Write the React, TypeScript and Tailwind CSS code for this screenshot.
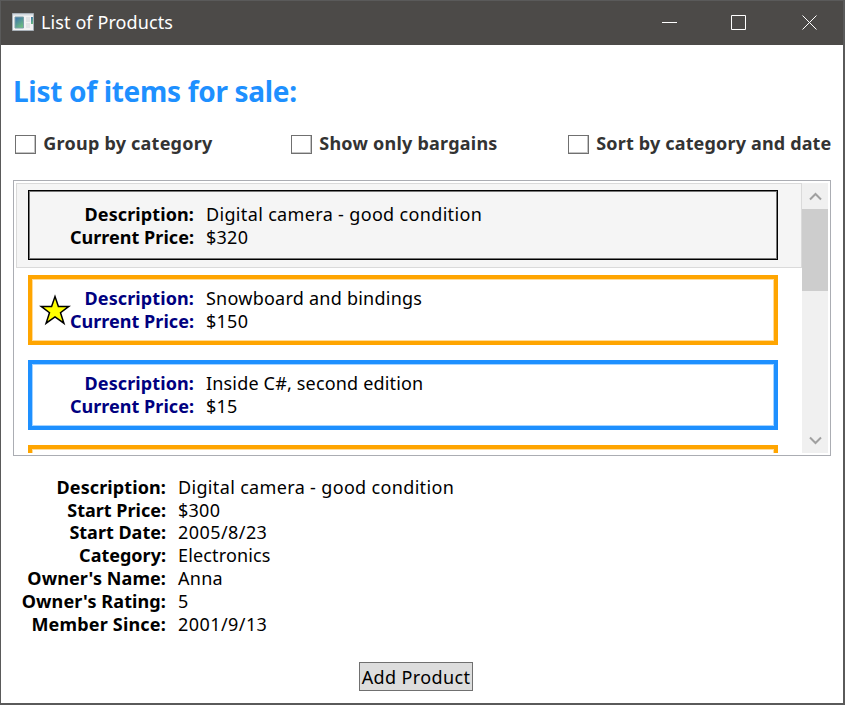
import React from "react";

type Kind = "selected" | "star" | "plain";

const FRAME: Record<Kind, string> = {
  selected: "border border-black",
  star: "border-4 border-[#ffa500]",
  plain: "border-4 border-[#1e90ff]",
};

const INNER: Record<Kind, string> = {
  selected: "border-[#777]",
  star: "border-[#ffdb99]",
  plain: "border-[#a5d3ff]",
};

const products: { id: number; name?: string; price?: string; kind: Kind; track?: string }[] = [
  { id: 1, name: "Digital camera - good condition", price: "$320", kind: "selected", track: "tracking-[0.34px]" },
  { id: 2, name: "Snowboard and bindings", price: "$150", kind: "star", track: "tracking-[0.24px]" },
  { id: 3, name: "Inside C#, second edition", price: "$15", kind: "plain", track: "tracking-[0.17px]" },
  { id: 4, kind: "star" },
];

const details = [
  ["Description:", "Digital camera - good condition", "tracking-[0.34px]", "tracking-[0.1px]"],
  ["Start Price:", "$300", "tracking-[0.25px]", "tracking-normal"],
  ["Start Date:", "2005/8/23", "tracking-[0.43px]", "tracking-normal"],
  ["Category:", "Electronics", "tracking-[0.15px]", "tracking-normal"],
  ["Owner's Name:", "Anna", "tracking-[0.25px]", "tracking-[0.08px]"],
  ["Owner's Rating:", "5", "tracking-[0.25px]", "tracking-[0.1px]"],
  ["Member Since:", "2001/9/13", "tracking-[0.43px]", "tracking-[0.18px]"],
];

function Star() {
  return (
    <svg width="32" height="32" viewBox="0 0 32 32" className="absolute top-[19px] left-[11px]">
      <path
        d="M16 2.500 L19.400 12.400 H29.800 L21.500 18.700 L24.900 29.200 L16 22.800 L7.100 29.200 L10.500 18.700 L2.200 12.400 H12.600 Z"
        fill="#ffff00"
        stroke="#000"
        strokeWidth="1.5"
      />
    </svg>
  );
}

function Item({ name, price, kind, track }: { name?: string; price?: string; kind: Kind; track?: string }) {
  const selected = kind === "selected";
  const labelColor = selected ? "text-black" : "text-[#000080]";
  return (
    <li
      className={`h-[85px] w-[786px] shrink-0 border pt-[6px] pl-[11px] ${
        selected ? "border-[#dadada] bg-[#f5f5f5]" : "border-transparent"
      }`}
    >
      <div className="relative h-[70px] w-[750px]">
        <div className={`absolute inset-0 ${FRAME[kind]}`}>
          <div className={`h-full border ${INNER[kind]}`} />
        </div>
        {name && kind === "star" && <Star />}
        {name && (
          <div
            className={`relative grid grid-cols-[166px_1fr] gap-x-3 leading-[23px] ${selected ? "pt-[13px]" : "pt-[12px]"}`}
          >
            <b className={`text-right tracking-[0.1px] ${labelColor}`}>Description:</b>
            <span className={track}>{name}</span>
            <b className={`text-right tracking-[0.03px] ${labelColor}`}>Current Price:</b>
            <span className="tracking-[0.25px]">{price}</span>
          </div>
        )}
      </div>
    </li>
  );
}

function Check({ label, track }: { label: string; track: string }) {
  return (
    <label className="flex items-center">
      <span className="mt-px mr-[7.8px] h-[19px] w-[20.5px] border border-[#707070] bg-white shadow-[inset_-1px_-1px_0_#c4c4c4]" />
      <b className={`-mt-[2px] text-[#333] ${track}`}>{label}</b>
    </label>
  );
}

export default function App() {
  return (
    <div className="flex h-[705px] w-[845px] flex-col overflow-hidden border border-r-2 border-b-2 border-[#5a5a5a] bg-white font-['Noto_Sans','Open_Sans',sans-serif] text-[18px] text-black">
      <header className="flex h-[44px] shrink-0 items-center bg-[#4c4a48] pl-[11px] text-white">
        <svg width="23" height="19" viewBox="0 0 23 19" className="-mt-[2px]">
          <defs>
            <linearGradient id="g" x1="0" y1="0" x2="0.6" y2="1">
              <stop offset="0" stopColor="#3a6db0" />
              <stop offset="1" stopColor="#6cbb80" />
            </linearGradient>
          </defs>
          <path d="M.5 .5h21v17h-21z" fill="#f3f3f3" stroke="#a9b1b9" />
          <path d="M1 1h20v1.500H1z" fill="#d5dbe0" />
          <path d="M3 4h8.500v11H3z" fill="url(#g)" stroke="#7d9fa8" />
          <path d="M14 4h4v5h-4zM14 10h4v5h-4z" fill="#e2e4e6" />
          <path d="M19 4h2v7h-2z" fill="url(#g)" />
        </svg>
        <span className="-mt-[2px] ml-[6px] leading-6 tracking-[0.1px]">List of Products</span>
        <svg width="156" height="18" viewBox="0 0 156 18" className="-mt-[2px] mr-[25px] ml-auto" fill="none" stroke="#fff">
          <path d="M0 9.500h15M69.500 2.500h14v14h-14zM140.500 2.500l14 14M154.500 2.500l-14 14" />
        </svg>
      </header>
      <main className="flex flex-1 flex-col pr-3 pl-3">
        <h1 className="mt-[26px] text-[28px] leading-[40px] font-bold tracking-[-0.31px] text-[#1e90ff]">
          List of items for sale:
        </h1>
        <div className="mt-[20px] grid h-[26px] grid-cols-[276px_277px_auto] items-center pl-[2px] whitespace-nowrap">
          <Check label="Group by category" track="tracking-[0.23px]" />
          <Check label="Show only bargains" track="tracking-[0.23px]" />
          <Check label="Sort by category and date" track="tracking-[0.16px]" />
        </div>
        <div className="mt-[23px] flex h-[276px] w-[818px] shrink-0 border border-[#abadb3] p-[2px]">
          <ul className="flex h-[270px] flex-1 flex-col overflow-hidden">
            {products.map(({ id, ...p }) => (
              <Item key={id} {...p} />
            ))}
          </ul>
          <div className="flex w-[26px] flex-col bg-[#f0f0f0]">
            <svg width="26" height="26" fill="none" stroke="#a0a0a0" strokeWidth="2">
              <path d="M8 16.500l5.500-5.500L19 16.500" />
            </svg>
            <div className="h-[82px] bg-[#cdcdcd]" />
            <svg width="26" height="26" fill="none" stroke="#a0a0a0" strokeWidth="2" className="mt-auto">
              <path d="M8 10.500l5.500 5.500L19 10.500" />
            </svg>
          </div>
        </div>
        <dl className="mt-[19.8px] grid grid-cols-[153px_1fr] gap-x-3 leading-[22.82px]">
          {details.map(([k, v, t, kt]) => (
            <React.Fragment key={k}>
              <dt className={`text-right font-bold ${kt}`}>{k}</dt>
              <dd className={t}>{v}</dd>
            </React.Fragment>
          ))}
        </dl>
        <button className="mt-[26.5px] ml-[346px] h-[29px] w-[114px] border border-[#707070] bg-[#ddd] pt-px leading-[27px] tracking-[0.38px] whitespace-nowrap">
          Add Product
        </button>
      </main>
    </div>
  );
}
